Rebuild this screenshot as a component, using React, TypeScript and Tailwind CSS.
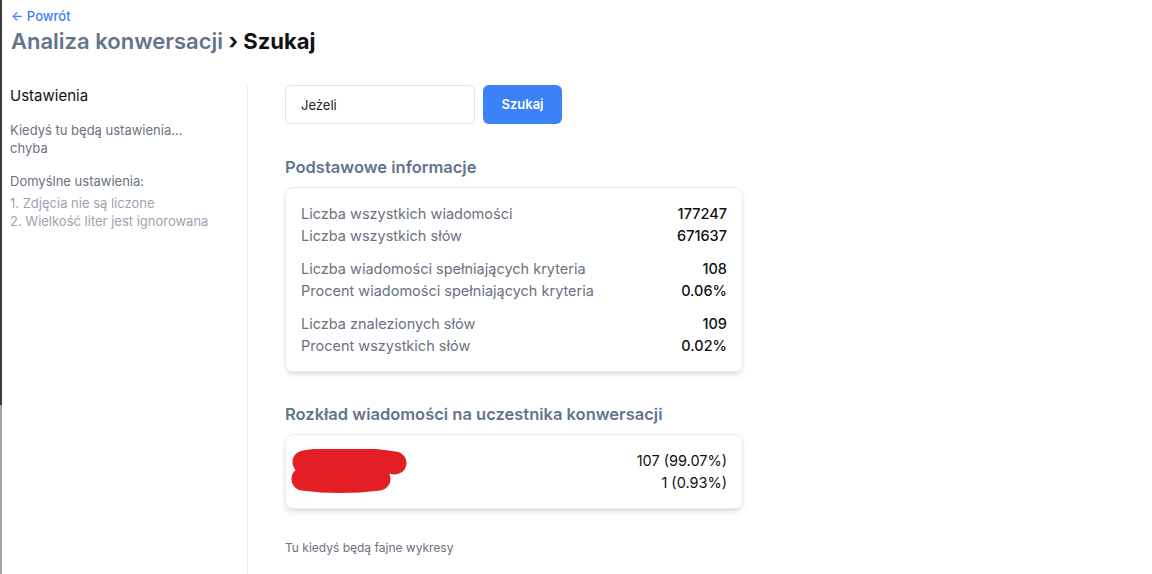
import React from "react";

const basic = [
  [
    ["Liczba wszystkich wiadomości", "177247"],
    ["Liczba wszystkich słów", "671637"],
  ],
  [
    ["Liczba wiadomości spełniających kryteria", "108"],
    ["Procent wiadomości spełniających kryteria", "0.06%"],
  ],
  [
    ["Liczba znalezionych słów", "109"],
    ["Procent wszystkich słów", "0.02%"],
  ],
];

const people = [
  ["Uczestnik 1", "107 (99.07%)"],
  ["Uczestnik 2", "1 (0.93%)"],
];

function Redacted() {
  // czerwone zamazanie nazw uczestników
  return (
    <svg
      className="absolute left-[4px] top-[14px]"
      width="122"
      height="46"
      viewBox="0 0 122 46"
    >
      <path
        d="M14 13 C35 9, 75 9, 105 14"
        stroke="#e31e24"
        strokeWidth="23"
        strokeLinecap="round"
        fill="none"
      />
      <path
        d="M13 30 C35 33, 65 33, 89 30"
        stroke="#e31e24"
        strokeWidth="23"
        strokeLinecap="round"
        fill="none"
      />
    </svg>
  );
}

export default function App() {
  return (
    <div
      className="flex min-h-[574px] bg-white"
      style={{ fontFamily: "Inter, 'Noto Sans', sans-serif" }}
    >
      <div className="flex w-[2px] flex-col">
        <div className="h-[405px] bg-[#3a3a3a]" />
        <div className="flex-1 bg-[#a3a3a3]" />
      </div>

      <div className="flex flex-1 flex-col pl-[8px] pt-[8px]">
        <a className="pl-[1px] text-[13px] leading-[16px] font-medium text-[#3b82f6]">← Powrót</a>
        <h1 className="mt-[1px] pl-[1px] text-[22px] leading-[32px] font-semibold text-[#64748b]">
          Analiza konwersacji <span className="font-bold text-[#111]">› Szukaj</span>
        </h1>

        <div className="mt-[27px] flex flex-1">
          <aside className="w-[238px] border-r border-[#edf1f6] pt-[1px]">
            <h2 className="text-[15px] leading-[22px] text-[#111]">Ustawienia</h2>
            <p className="mt-[14px] w-[190px] text-[13px] leading-[18px] text-[#6b7280]">
              Kiedyś tu będą ustawienia... chyba
            </p>
            <p className="mt-[15px] text-[13px] leading-[18px] text-[#6b7280]">
              Domyślne ustawienia:
            </p>
            <ol className="mt-[4px] text-[13px] leading-[18px] text-[#9ca3af]">
              <li>1. Zdjęcia nie są liczone</li>
              <li>2. Wielkość liter jest ignorowana</li>
            </ol>
          </aside>

          <main className="flex w-[495px] flex-col pl-[37px] pt-[1px]">
            <div className="flex gap-[8px]">
              <input
                className="h-[39px] w-[190px] rounded-md border border-[#dfe4eb] px-[15px] text-[13px] text-[#222] outline-none"
                defaultValue="Jeżeli"
              />
              <button className="h-[39px] w-[79px] rounded-md bg-[#3b82f6] text-[13px] font-semibold text-white">
                Szukaj
              </button>
            </div>

            <h3 className="mt-[31px] text-[16.5px] leading-[24px] font-semibold text-[#64748b]">
              Podstawowe informacje
            </h3>
            <div className="mt-[8px] flex flex-col gap-[11px] rounded-lg border border-[#e8ebf0] px-[15px] pt-[15px] pb-[14px] shadow-md">
              {basic.map((group, i) => (
                <div key={i}>
                  {group.map(([label, value]) => (
                    <div key={label} className="flex justify-between text-[14.5px] leading-[22px]">
                      <span className="text-[#6b7280]">{label}</span>
                      <span className="font-medium text-[#111]">{value}</span>
                    </div>
                  ))}
                </div>
              ))}
            </div>

            <h3 className="mt-[30px] text-[16.5px] leading-[24px] font-semibold text-[#64748b]">
              Rozkład wiadomości na uczestnika konwersacji
            </h3>
            <div className="relative mt-[8px] rounded-lg border border-[#e8ebf0] px-[15px] pt-[15px] pb-[14px] shadow-md">
              {people.map(([name, value]) => (
                <div key={value} className="flex justify-between text-[14.5px] leading-[22px]">
                  <span className="text-[#9ca3af]">{name}</span>
                  <span className="text-[#111]">{value}</span>
                </div>
              ))}
              <Redacted />
            </div>

            <p className="mt-[31px] text-[12px] leading-[16px] text-[#6b7280]">
              Tu kiedyś będą fajne wykresy
            </p>
          </main>
        </div>
      </div>
    </div>
  );
}
